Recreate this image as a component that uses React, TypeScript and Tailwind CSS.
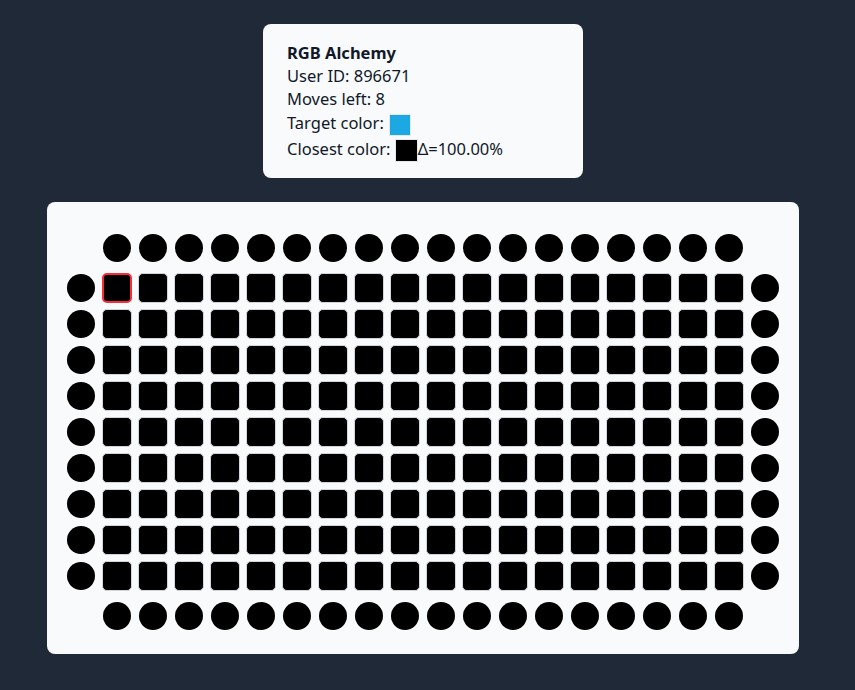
const COLS = 18;
const ROWS = 9;

function Dot() {
  return (
    <div className="flex h-[30px] w-[30px] items-center justify-center">
      <div className="h-[28px] w-[28px] rounded-full bg-black" />
    </div>
  );
}

function Tile({ selected }: { selected?: boolean }) {
  return (
    <div
      className={
        selected
          ? 'h-[30px] w-[30px] rounded-[5px] border-2 border-red-500 bg-black'
          : 'h-[30px] w-[30px] rounded-[5px] border border-gray-300 bg-black'
      }
    />
  );
}

export default function App() {
  const cols = Array.from({ length: COLS }, (_, i) => i);
  const rows = Array.from({ length: ROWS }, (_, i) => i);

  return (
    <div
      className="min-h-screen bg-[#1f2937] pt-6 pr-[9px] text-[#111827]"
      style={{ fontFamily: '"Noto Sans", "Open Sans", sans-serif' }}
    >
      <div className="flex flex-col items-center">
        {/* Info card */}
        <div className="w-[320px] rounded-lg bg-[#f8fafc] px-6 pt-[17px] pb-[17px] text-[16.5px] leading-[23px]">
          <div className="font-bold">RGB Alchemy</div>
          <div>User ID: 896671</div>
          <div>Moves left: 8</div>
          <div className="flex h-[25px] items-center">
            <span>Target color:&nbsp;</span>
            <span className="mt-1 ml-[1px] inline-block h-[22px] w-[22px] border border-gray-200 bg-[#1ba8e3]" />
          </div>
          <div className="flex h-[26px] items-center">
            <span>Closest color:&nbsp;</span>
            <span className="mt-1 inline-block h-[23px] w-[23px] border border-gray-200 bg-black" />
            <span>Δ=100.00%</span>
          </div>
        </div>

        {/* Board */}
        <div className="mt-6 w-[752px] rounded-lg bg-[#f8fafc] px-[19px] pt-[31px] pb-[23px]">
          <div className="flex gap-[6px]">
            <div className="w-[30px]" />
            {cols.map((c) => (
              <Dot key={c} />
            ))}
          </div>

          <div className="mt-[10px] flex flex-col gap-[6px]">
            {rows.map((r) => (
              <div key={r} className="flex gap-[6px]">
                <Dot />
                {cols.map((c) => (
                  <Tile key={c} selected={r === 0 && c === 0} />
                ))}
                <Dot />
              </div>
            ))}
          </div>

          <div className="mt-[10px] flex gap-[6px]">
            <div className="w-[30px]" />
            {cols.map((c) => (
              <Dot key={c} />
            ))}
          </div>
        </div>
      </div>
    </div>
  );
}
